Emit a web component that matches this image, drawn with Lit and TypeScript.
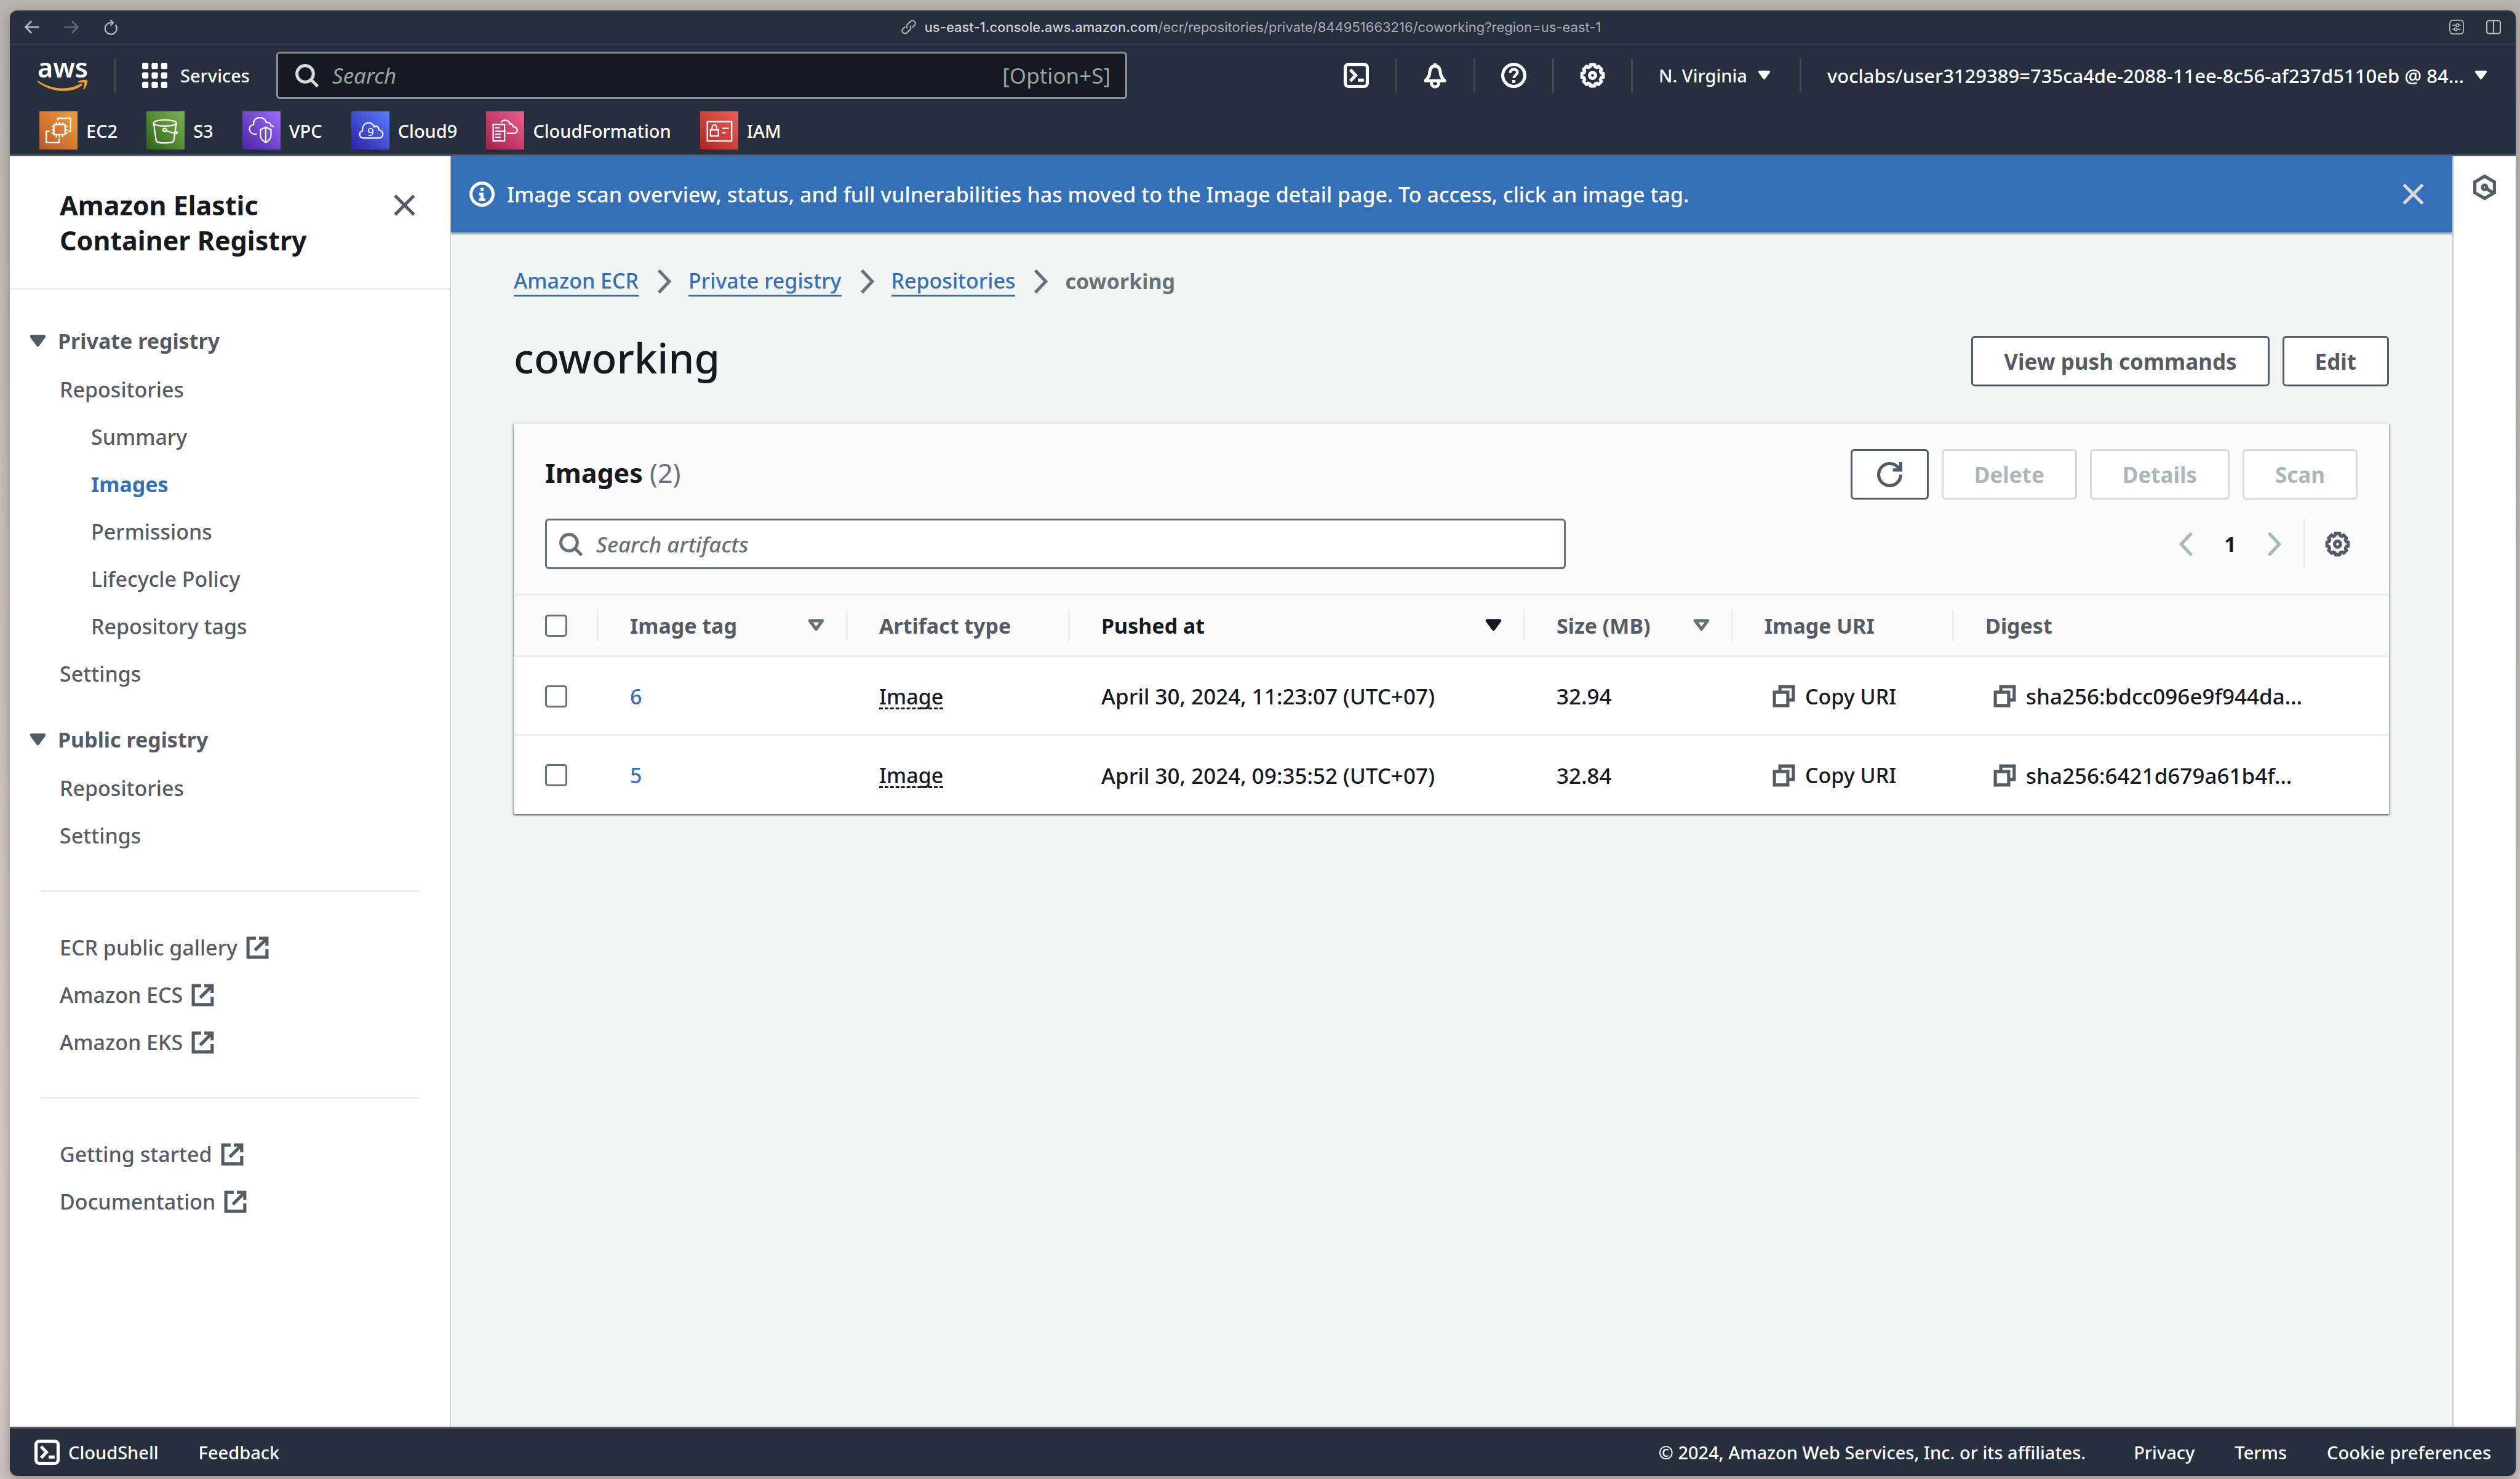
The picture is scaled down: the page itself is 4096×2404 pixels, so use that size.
import { LitElement, html, css, svg, nothing, type TemplateResult } from "lit";
import { customElement } from "lit/decorators.js";
import { classMap } from "lit/directives/class-map.js";

const gearPath = (() => {
  const points: string[] = [];
  for (let i = 0; i < 8; i++) {
    const base = (i * Math.PI) / 4 - Math.PI / 2;
    const steps: Array<[number, number]> = [
      [-0.2, 6.9],
      [0.2, 6.9],
      [0.27, 5.7],
      [0.52, 5.7],
    ];
    for (const [offset, radius] of steps) {
      const x = 8 + radius * Math.cos(base + offset);
      const y = 8 + radius * Math.sin(base + offset);
      points.push(`${x.toFixed(2)} ${y.toFixed(2)}`);
    }
  }
  return `M${points.join("L")}Z`;
})();

const shapes: Record<string, TemplateResult> = {
  search: svg`<circle cx="7" cy="7" r="5.2" /><path d="M15 15l-4.3-4.3" />`,
  close: svg`<path d="M2 2l12 12M14 2L2 14" />`,
  gear: svg`<path d=${gearPath} stroke-linejoin="round" /><circle cx="8" cy="8" r="1.9" />`,
  refresh: svg`<path d="M10 5h5V0" /><path d="M15 8a7 7 0 1 1-1.1-3.8L15 5" />`,
  external: svg`<path d="M14 9v5H2V2h5" /><path d="M9 2h5v4.6" /><path d="M6.4 9.6L14 2" />`,
  copy: svg`<path d="M2 5.5h8.5V14H2z" /><path d="M5.5 5V2H14v8.5h-3" />`,
  caret: svg`<path d="M4 5h8l-4 5.4z" fill="currentColor" stroke-linejoin="round" />`,
  caretHollow: svg`<path d="M4 5h8l-4 5.4z" stroke-linejoin="round" />`,
  right: svg`<path d="M5 1l6.6 7L5 15" />`,
  left: svg`<path d="M11 1L4.400 8l6.600 7" />`,
  bell: svg`<path d="M8 0.300v1.700" /><path d="M8 2C5.600 2 4.800 4.200 4.600 6.300 4.400 8.900 3.300 9.800 1.900 11.400h12.200C12.700 9.800 11.600 8.900 11.400 6.300 11.200 4.200 10.400 2 8 2z" stroke-linejoin="round" /><path d="M5.700 12v1a2.300 2.300 0 0 0 4.600 0v-1" />`,
  help: svg`<circle cx="8" cy="8" r="7" /><path d="M5.700 6.400C5.700 4.900 6.700 4.100 8 4.100s2.300.8 2.300 2c0 1.600-2.300 1.900-2.300 3.700" stroke-width="1.700" /><path d="M8 10.900v1.900" />`,
  info: svg`<circle cx="8" cy="8" r="7" /><path d="M8 4v2" /><path d="M6.200 8H8v3.300M6 11.500h4" stroke-width="1.800" />`,
  shell: svg`<rect x="1" y="1" width="14" height="14" rx="2" /><path d="M4.200 4.400L7.600 8l-3.400 3.600" /><path d="M9 11h3.800" />`,
  hexagon: svg`<path d="M8 1l6.200 3.600v6.800L8 15l-6.200-3.600V4.600z" /><circle cx="8" cy="8" r="1.400" /><path d="M8.500 8.500l4.500 2.700" />`,
  grid: svg`<g fill="currentColor" stroke="none">${[0, 6, 12].map((y) =>
    [0, 6, 12].map((x) => svg`<rect x=${x} y=${y} width="4" height="4" rx="1" />`),
  )}</g>`,
  back: svg`<path d="M15.500 8H1M7.500 1.500L1 8l6.500 6.500" stroke-width="1.800" />`,
  forward: svg`<path d="M0.500 8H15M8.500 1.500L15 8l-6.500 6.500" stroke-width="1.800" />`,
  reload: svg`<path d="M13 5.500A6.300 6.300 0 1 1 9 3.300" stroke-width="1.500" /><path d="M7.500 0.300L10.600 3.400 7.500 6.400" stroke-width="1.500" />`,
  link: svg`<path d="M6.700 9.500a3 3 0 0 1 0-4.300L10 1.900a3 3 0 0 1 4.200 4.300L12 8.500" stroke-width="1.500" /><path d="M9.300 6.600a3 3 0 0 1 0 4.300L6 14.100a3 3 0 0 1-4.200-4.300L4 7.500" stroke-width="1.500" />`,
  tune: svg`<g stroke-width="1.100"><rect x="0.600" y="0.600" width="14.800" height="14.800" rx="3.500" /><path d="M3.500 6h3.800M10.500 6h2M3.500 10.400h2M8.700 10.400h3.800" /><circle cx="8.900" cy="6" r="1.500" /><circle cx="7.100" cy="10.400" r="1.500" /></g>`,
  split: svg`<g stroke-width="1.400"><rect x="0.700" y="1" width="14.600" height="14" rx="2.200" /><path d="M8 1v14" /></g>`,
};

const icon = (name: string, size = "") => html`
  <svg class="icon ${size}" viewBox="0 0 16 16" aria-hidden="true">${shapes[name]}</svg>
`;

interface Service {
  name: string;
  from: string;
  to: string;
  art: TemplateResult;
}

const services: Service[] = [
  {
    name: "EC2",
    from: "#b9572a",
    to: "#f3a036",
    art: svg`<path d="M35 17v-4h24v25h-5" /><path d="M20 38h-7v21h24v-8" /><rect x="27.500" y="25" width="21" height="19" />
      <path d="M32 20v5M38 20v5M44 20v5M32 44v5M38 44v5M44 44v5M23 29h4M23 35h4M23 41h4M49 29h4M49 35h4M49 41h4" />`,
  },
  {
    name: "S3",
    from: "#2f611c",
    to: "#7fb34e",
    art: svg`<ellipse cx="35" cy="22" rx="21.500" ry="5.800" /><path d="M13.500 22l5 34c1 5 32 5 33 0l5-34" /><circle cx="34.500" cy="35" r="3" /><path d="M37 36c7 3 14 6 20 6 3-2 0-4-4-5" />`,
  },
  {
    name: "VPC",
    from: "#4a25a0",
    to: "#9b6cff",
    art: svg`<path d="M27 43h-4c-13-2-12-17-2-18C20 8 42 8 45 21c6-1 9 3 9 6 2 0 4 1 5 3" /><path d="M44 30l10 4.500V45c0 7-5 11-10 14-5-3-10-7-10-14V34.500z" /><path d="M44 30v28" />`,
  },
  {
    name: "Cloud9",
    from: "#2a22a6",
    to: "#5a7dff",
    art: svg`<path d="M24 50.500c-10 0-10.500-12-3-13.500C20 19 39 17 43 29c5-3 9 1 9 6 10 2 10 15 0 15.500z" /><text class="nine" x="36.500" y="47" text-anchor="middle">9</text>`,
  },
  {
    name: "CloudFormation",
    from: "#a01f4c",
    to: "#ee5e8c",
    art: svg`<path d="M13.500 24.500h21.500V56H13.500z" /><path d="M17 31h9M17 37.500h20M17 43h11M17 49h11" /><path d="M29 21c2-6 15-6 16 3 4-1 6 1 6 5 10 1 11 12 1 12.500H39" />`,
  },
  {
    name: "IAM",
    from: "#ad2420",
    to: "#ee6158",
    art: svg`<rect x="13.500" y="19.500" width="46" height="36.500" /><rect x="19.500" y="35" width="15" height="11.500" /><path d="M22.500 35v-4c0-7 9-7 9 0v4M42 32h12M42 40.500h6" />`,
  },
];

interface NavItem {
  label: string;
  nested?: boolean;
  current?: boolean;
  external?: boolean;
}

const privateItems: NavItem[] = [
  { label: "Repositories" },
  { label: "Summary", nested: true },
  { label: "Images", nested: true, current: true },
  { label: "Permissions", nested: true },
  { label: "Lifecycle Policy", nested: true },
  { label: "Repository tags", nested: true },
  { label: "Settings" },
];
const publicItems: NavItem[] = [{ label: "Repositories" }, { label: "Settings" }];
const galleryItems: NavItem[] = [
  { label: "ECR public gallery", external: true },
  { label: "Amazon ECS", external: true },
  { label: "Amazon EKS", external: true },
];
const helpItems: NavItem[] = [
  { label: "Getting started", external: true },
  { label: "Documentation", external: true },
];

const images = [
  { tag: "6", pushed: "April 30, 2024, 11:23:07 (UTC+07)", size: "32.94", digest: "sha256:bdcc096e9f944da…" },
  { tag: "5", pushed: "April 30, 2024, 09:35:52 (UTC+07)", size: "32.84", digest: "sha256:6421d679a61b4f…" },
];

const columns: Array<{ label: string; sort?: string; active?: boolean }> = [
  { label: "Image tag", sort: "caretHollow" },
  { label: "Artifact type" },
  { label: "Pushed at", sort: "caret", active: true },
  { label: "Size (MB)", sort: "caretHollow" },
  { label: "Image URI" },
  { label: "Digest" },
];

const base = css`
  * {
    box-sizing: border-box;
  }
  a {
    color: inherit;
    text-decoration: none;
  }
  button {
    font: inherit;
    color: inherit;
    background: none;
    border: 0;
    padding: 0;
    display: inline-flex;
    align-items: center;
    white-space: nowrap;
  }
  input {
    font: inherit;
  }
  ul {
    list-style: none;
    margin: 0;
    padding: 0;
  }
  .icon {
    width: 41px;
    height: 41px;
    flex: none;
    display: block;
    fill: none;
    stroke: currentColor;
    stroke-width: 2;
    overflow: visible;
  }
  .icon.small {
    width: 31px;
    height: 31px;
  }
  .icon.tiny {
    width: 24px;
    height: 24px;
  }
`;

@customElement("browser-bar")
export class BrowserBar extends LitElement {
  static styles = [
    base,
    css`
      :host {
        display: grid;
        grid-template-columns: 1fr auto 1fr;
        align-items: center;
        height: 56px;
        padding: 0 24px;
        background: #262f3d;
        border-bottom: 2px solid #303a49;
        color: #b9bdc3;
        font: 400 22px "Inter", "Liberation Sans", sans-serif;
      }
      .group {
        display: flex;
        align-items: center;
        gap: 40px;
      }
      .end {
        justify-content: flex-end;
        gap: 36px;
      }
      .dim {
        color: #626975;
      }
      .address {
        display: flex;
        align-items: center;
        gap: 14px;
        margin-right: 38px;
        color: #a9adb4;
      }
      .domain {
        font-weight: 500;
        color: #cdd0d3;
      }
    `,
  ];
  render() {
    return html`
      <div class="group">
        <button aria-label="Back">${icon("back", "tiny")}</button>
        <button class="dim" aria-label="Forward">${icon("forward", "tiny")}</button>
        <button aria-label="Reload">${icon("reload", "tiny")}</button>
      </div>
      <div class="address">
        ${icon("link", "tiny")}
        <span><span class="domain">us-east-1.console.aws.amazon.com</span>/ecr/repositories/private/844951663216/coworking?region=us-east-1</span>
      </div>
      <div class="group end">
        <button aria-label="Site controls">${icon("tune", "tiny")}</button>
        <button aria-label="Split view">${icon("split", "tiny")}</button>
      </div>
    `;
  }
}

@customElement("console-header")
export class ConsoleHeader extends LitElement {
  static styles = [
    base,
    css`
      :host {
        display: flex;
        flex-direction: column;
        padding-top: 11px;
        height: 181px;
        background: #262f3d;
        border-bottom: 3px solid #545b64;
        color: #fff;
        font-size: 29px;
        font-weight: 500;
      }
      .bar {
        display: flex;
        align-items: center;
        height: 77px;
        padding-left: 45px;
      }
      .logo {
        width: 82px;
        height: 54px;
        display: block;
        margin-right: 42px;
        overflow: visible;
      }
      .word {
        font-size: 43px;
        font-weight: 600;
        fill: #fff;
      }
      .services {
        display: flex;
        align-items: center;
        gap: 21px;
        height: 56px;
        padding-left: 43px;
        border-left: 3px solid #414750;
        margin-right: 43px;
      }
      .search {
        display: flex;
        align-items: center;
        flex: 0 1 1383px;
        height: 77px;
        border: 3px solid #879596;
        border-radius: 6px;
        background: #16191f;
        color: #95a5a6;
        padding: 0 24px 0 26px;
        font-size: 35px;
        font-weight: 400;
      }
      .search .icon {
        color: #d5dbdb;
      }
      .search input {
        flex: 1;
        min-width: 0;
        margin-left: 21px;
        padding: 0;
        border: 0;
        background: none;
        color: inherit;
        outline: none;
      }
      .search input::placeholder {
        color: #95a5a6;
        font-style: italic;
        opacity: 1;
      }
      .tools {
        display: flex;
        align-items: center;
        margin-left: auto;
      }
      .tool {
        height: 56px;
        padding: 0 42px;
        border-right: 3px solid #414750;
        gap: 12px;
      }
      .account {
        padding-right: 41px;
        border-right: 0;
        font-size: 31px;
      }
      .favorites {
        display: flex;
        gap: 47px;
        padding: 20px 0 0 48px;
      }
      .favorite {
        display: flex;
        align-items: center;
        gap: 14px;
      }
      .art {
        width: 62px;
        height: 62px;
        display: block;
        fill: none;
        stroke: #fff;
        stroke-width: 2.6;
      }
      .nine {
        font-size: 22px;
        font-weight: 400;
        fill: #fff;
        stroke: none;
      }
    `,
  ];
  render() {
    return html`
      <div class="bar">
        <a href="#home" aria-label="AWS home">
          <svg class="logo" viewBox="0 0 82 54">
            <text class="word" x="41" y="30" text-anchor="middle">aws</text>
            <path fill="#f29d38" d="M1 35.500c25 15.500 50 15 69 4.500 2.500-1.200 4 1 2 3C55 56.500 21 54.500.5 37.500c-1.200-1.200-.3-2.600.5-2z" />
            <path fill="#f29d38" d="M66 36.500c4-3 14-3.500 15-1.500s-1 10-5.500 14c-1 .7-1.500 0-1.200-.8 1.400-3.800 2.700-8.200 2-9.200-1.200-1.200-6-1-10-.9-1 0-1.200-1-.3-1.600z" />
          </svg>
        </a>
        <button class="services">${icon("grid")}Services</button>
        <label class="search">
          ${icon("search")}
          <input type="search" placeholder="Search" aria-label="Search" />
          <span>[Option+S]</span>
        </label>
        <div class="tools">
          <button class="tool" aria-label="CloudShell">${icon("shell")}</button>
          <button class="tool" aria-label="Notifications">${icon("bell")}</button>
          <button class="tool" aria-label="Help">${icon("help")}</button>
          <button class="tool" aria-label="Settings">${icon("gear")}</button>
          <button class="tool">N. Virginia ${icon("caret", "small")}</button>
          <button class="tool account">voclabs/user3129389=735ca4de-2088-11ee-8c56-af237d5110eb @ 84... ${icon("caret", "small")}</button>
        </div>
      </div>
      <nav class="favorites">
        ${services.map(
          (service, i) => html`
            <a class="favorite" href="#${service.name}">
              <svg class="art" viewBox="0 0 72 72" aria-hidden="true">
                <defs>
                  <linearGradient id="tile${i}" x1="0" y1="1" x2="1" y2="0">
                    <stop offset="0" stop-color=${service.from} />
                    <stop offset="1" stop-color=${service.to} />
                  </linearGradient>
                </defs>
                <rect width="72" height="72" fill="url(#tile${i})" stroke="none" />
                ${service.art}
              </svg>
              ${service.name}
            </a>
          `,
        )}
      </nav>
    `;
  }
}

@customElement("side-navigation")
export class SideNavigation extends LitElement {
  static styles = [
    base,
    css`
      :host {
        display: block;
        width: 717px;
        flex: none;
        background: #fff;
        color: #545b64;
        font-size: 34px;
        font-weight: 500;
        line-height: 57px;
        border-right: 1px solid #c3c8c9;
      }
      .title {
        display: flex;
        justify-content: space-between;
        align-items: flex-start;
        padding: 51px 54px 49px 81px;
        border-bottom: 3px solid #eaeded;
      }
      h2 {
        margin: 0;
        color: #16191f;
        font-size: 43px;
        line-height: 57px;
        font-weight: 700;
        max-width: 460px;
      }
      .title button {
        padding-top: 8px;
      }
      .body {
        padding: 55px 51px 51px;
      }
      .section {
        display: flex;
        align-items: center;
        gap: 12px;
        margin-left: -26px;
        font-weight: 700;
      }
      ul {
        display: flex;
        flex-direction: column;
        gap: 20px;
        padding: 22px 0 0 30px;
      }
      ul.plain {
        padding-top: 0;
      }
      ul + .section {
        margin-top: 50px;
      }
      li.nested {
        padding-left: 51px;
      }
      .current {
        color: #3370b7;
        font-weight: 700;
      }
      li a {
        display: flex;
        align-items: center;
        gap: 12px;
      }
      hr {
        border: 0;
        border-top: 3px solid #eaeded;
        margin: 60px 0 62px;
      }
    `,
  ];
  private list(items: NavItem[], plain = false) {
    return html`
      <ul class=${classMap({ plain })}>
        ${items.map(
          (item) => html`
            <li class=${classMap({ nested: !!item.nested, current: !!item.current })}>
              <a href="#">${item.label} ${item.external ? icon("external") : nothing}</a>
            </li>
          `,
        )}
      </ul>
    `;
  }
  render() {
    return html`
      <div class="title">
        <h2>Amazon Elastic Container Registry</h2>
        <button aria-label="Close navigation">${icon("close")}</button>
      </div>
      <nav class="body">
        <button class="section">${icon("caret")}Private registry</button>
        ${this.list(privateItems)}
        <button class="section">${icon("caret")}Public registry</button>
        ${this.list(publicItems)}
        <hr />
        ${this.list(galleryItems, true)}
        <hr />
        ${this.list(helpItems, true)}
      </nav>
    `;
  }
}

@customElement("images-card")
export class ImagesCard extends LitElement {
  static styles = [
    base,
    css`
      :host {
        display: block;
        background: #fff;
        border-top: 2px solid #eaeded;
        box-shadow: 0 2px 2px #6f7b80, 2px 2px 3px #c0c7c9, -2px 2px 3px #c0c7c9;
        color: #16191f;
        font-size: 34px;
        font-weight: 500;
      }
      .head {
        background: #fafafa;
        padding: 41px 51px 40px;
        display: flex;
        flex-direction: column;
        gap: 31px;
      }
      .line {
        display: flex;
        justify-content: space-between;
        align-items: center;
      }
      h2 {
        margin: 0;
        padding-bottom: 4px;
        font-size: 43px;
        line-height: 56px;
        font-weight: 700;
      }
      h2 span {
        font-weight: 400;
        color: #687078;
      }
      .actions {
        display: flex;
        gap: 21px;
      }
      .action {
        height: 82px;
        padding: 0 50px;
        border: 3px solid #545b64;
        border-radius: 6px;
        background: #fff;
        color: #545b64;
        font-size: 35px;
        font-weight: 700;
      }
      .action.square {
        padding: 0 40px;
      }
      .action:disabled {
        border-color: #d5dbdb;
        color: #aab7b8;
      }
      .filter {
        display: flex;
        align-items: center;
        gap: 21px;
        flex: 0 1 1659px;
        height: 82px;
        padding: 0 18px;
        border: 3px solid #687078;
        border-radius: 6px;
        background: #fff;
        color: #687078;
        font-size: 35px;
      }
      .filter input {
        flex: 1;
        min-width: 0;
        border: 0;
        padding: 0;
        background: none;
        outline: none;
      }
      .filter input::placeholder {
        color: #687078;
        font-style: italic;
        opacity: 1;
      }
      .pages {
        display: flex;
        align-items: center;
        height: 82px;
        padding-right: 12px;
      }
      .pages button {
        color: #aab7b8;
      }
      .page {
        width: 100px;
        text-align: center;
        font-weight: 700;
      }
      .pages .preferences {
        margin-left: 28px;
        padding-left: 32px;
        height: 82px;
        border-left: 3px solid #eaeded;
        color: #545b64;
      }
      table {
        width: 100%;
        table-layout: fixed;
        border-collapse: collapse;
        text-align: left;
      }
      .c-check {
        width: 138px;
      }
      .c-tag {
        width: 405px;
      }
      .c-type {
        width: 361px;
      }
      .c-pushed {
        width: 740px;
      }
      .c-size {
        width: 338px;
      }
      .c-uri {
        width: 359px;
      }
      th {
        height: 100px;
        padding: 0;
        background: #fafafa;
        border-top: 3px solid #eaeded;
        border-bottom: 3px solid #eaeded;
        color: #545b64;
        font-weight: 700;
      }
      .cell {
        display: flex;
        align-items: center;
        justify-content: space-between;
        height: 51px;
        padding: 0 28px 0 51px;
        border-right: 3px solid #eaeded;
        white-space: nowrap;
      }
      th:last-child .cell {
        border-right: 0;
      }
      .active {
        color: #16191f;
      }
      .cell .icon {
        color: #687078;
      }
      .active .icon {
        color: #16191f;
      }
      td {
        height: 128px;
        padding: 2px 0 0 51px;
        white-space: nowrap;
        border-bottom: 3px solid #eaeded;
      }
      .data {
        font-size: 35px;
      }
      tr:last-child td {
        border-bottom: 0;
      }
      input[type="checkbox"] {
        appearance: none;
        display: block;
        width: 36px;
        height: 36px;
        margin: 0;
        border: 3px solid #687078;
        border-radius: 5px;
        background: #fff;
      }
      .tag {
        color: #3370b7;
      }
      .hint {
        border-bottom: 3px dashed #16191f;
        line-height: 36px;
        display: inline-block;
      }
      .copy {
        display: flex;
        gap: 14px;
        padding-left: 11px;
      }
      .copy .icon {
        color: #545b64;
      }
    `,
  ];
  render() {
    return html`
      <div class="head">
        <div class="line">
          <h2>Images <span>(2)</span></h2>
          <div class="actions">
            <button class="action square" aria-label="Refresh">${icon("refresh")}</button>
            <button class="action" disabled>Delete</button>
            <button class="action" disabled>Details</button>
            <button class="action" disabled>Scan</button>
          </div>
        </div>
        <div class="line">
          <label class="filter">
            ${icon("search")}
            <input type="search" placeholder="Search artifacts" aria-label="Search artifacts" />
          </label>
          <div class="pages">
            <button aria-label="Previous page">${icon("left")}</button>
            <span class="page">1</span>
            <button aria-label="Next page">${icon("right")}</button>
            <button class="preferences" aria-label="Preferences">${icon("gear")}</button>
          </div>
        </div>
      </div>
      <table>
        <colgroup>
          <col class="c-check" />
          <col class="c-tag" />
          <col class="c-type" />
          <col class="c-pushed" />
          <col class="c-size" />
          <col class="c-uri" />
          <col />
        </colgroup>
        <thead>
          <tr>
            <th><div class="cell"><input type="checkbox" aria-label="Select all images" /></div></th>
            ${columns.map(
              (column) => html`
                <th class=${classMap({ active: !!column.active })}>
                  <div class="cell">${column.label}${column.sort ? icon(column.sort) : nothing}</div>
                </th>
              `,
            )}
          </tr>
        </thead>
        <tbody>
          ${images.map(
            (image) => html`
              <tr>
                <td><input type="checkbox" aria-label="Select image ${image.tag}" /></td>
                <td><a class="tag" href="#${image.tag}">${image.tag}</a></td>
                <td><span class="hint">Image</span></td>
                <td class="data">${image.pushed}</td>
                <td class="data">${image.size}</td>
                <td><button class="copy">${icon("copy")}Copy URI</button></td>
                <td class="data"><button class="copy">${icon("copy")}${image.digest}</button></td>
              </tr>
            `,
          )}
        </tbody>
      </table>
    `;
  }
}

@customElement("app-root")
export class AppRoot extends LitElement {
  static styles = [
    base,
    css`
      :host {
        display: block;
        min-height: 100vh;
        box-sizing: border-box;
        padding: 17px 7px 5px 16px;
        background: linear-gradient(180deg, #b8b4ae, #c4bfbb 30%, #d6cecc 90%, #cbc1be);
        font-family: "Noto Sans", "Open Sans", sans-serif;
      }
      .window {
        display: flex;
        flex-direction: column;
        min-height: calc(100vh - 22px);
        border-radius: 12px;
        overflow: hidden;
        box-shadow: 0 4px 18px rgba(60, 50, 40, 0.4);
      }
      .workspace {
        display: flex;
        flex: 1;
      }
      main {
        flex: 1;
        min-width: 0;
        background: #f2f4f3;
        font-weight: 500;
      }
      .flash {
        display: flex;
        align-items: center;
        height: 123px;
        padding: 0 43px 0 30px;
        gap: 20px;
        background: #3370b7;
        color: #fff;
        font-size: 34px;
        box-shadow: 0 3px 3px #7f8b90;
      }
      .flash button {
        margin-left: auto;
        color: #d5dbdb;
      }
      .content {
        padding: 52px 103px 100px 102px;
      }
      .crumbs {
        display: flex;
        align-items: center;
        gap: 20px;
        font-size: 34px;
        line-height: 57px;
        color: #687078;
      }
      .crumbs a {
        color: #3370b7;
        line-height: 46px;
        border-bottom: 3px solid #3370b7;
      }
      .crumbs b {
        font-weight: 700;
      }
      .heading {
        display: flex;
        justify-content: space-between;
        align-items: center;
        padding: 49px 0 48px;
      }
      h1 {
        margin: 0;
        padding-bottom: 12px;
        font-size: 67px;
        line-height: 92px;
        font-weight: 500;
        color: #16191f;
      }
      .actions {
        display: flex;
        gap: 21px;
      }
      .action {
        height: 82px;
        padding: 0 50px;
        border: 3px solid #545b64;
        border-radius: 6px;
        background: #fff;
        color: #545b64;
        font-size: 35px;
        font-weight: 700;
      }
      .rail {
        flex: none;
        width: 103px;
        padding: 30px 0 0 30px;
        background: #fff;
        border-left: 2px solid #c3c8c9;
        color: #545b64;
      }
      footer {
        display: flex;
        align-items: center;
        height: 80px;
        padding: 0 40px;
        gap: 65px;
        background: #262f3d;
        border-top: 3px solid #545b64;
        color: #fff;
        font-size: 29px;
        font-weight: 500;
      }
      footer button {
        gap: 14px;
      }
      footer .legal {
        margin-left: auto;
        margin-right: 13px;
      }
    `,
  ];
  render() {
    return html`
      <div class="window">
        <browser-bar></browser-bar>
        <console-header></console-header>
        <div class="workspace">
          <side-navigation></side-navigation>
          <main>
            <div class="flash" role="status">
              ${icon("info")}
              <span>Image scan overview, status, and full vulnerabilities has moved to the Image detail page. To access, click an image tag.</span>
              <button aria-label="Dismiss">${icon("close")}</button>
            </div>
            <div class="content">
              <nav class="crumbs" aria-label="Breadcrumb">
                <a href="#">Amazon ECR</a>${icon("right")}<a href="#">Private registry</a>${icon("right")}<a href="#">Repositories</a>${icon("right")}<b>coworking</b>
              </nav>
              <div class="heading">
                <h1>coworking</h1>
                <div class="actions">
                  <button class="action">View push commands</button>
                  <button class="action">Edit</button>
                </div>
              </div>
              <images-card></images-card>
            </div>
          </main>
          <aside class="rail"><button aria-label="Assistant">${icon("hexagon")}</button></aside>
        </div>
        <footer>
          <button>${icon("shell")}CloudShell</button>
          <button>Feedback</button>
          <span class="legal">© 2024, Amazon Web Services, Inc. or its affiliates.</span>
          <a href="#privacy">Privacy</a>
          <a href="#terms">Terms</a>
          <a href="#cookies">Cookie preferences</a>
        </footer>
      </div>
    `;
  }
}
